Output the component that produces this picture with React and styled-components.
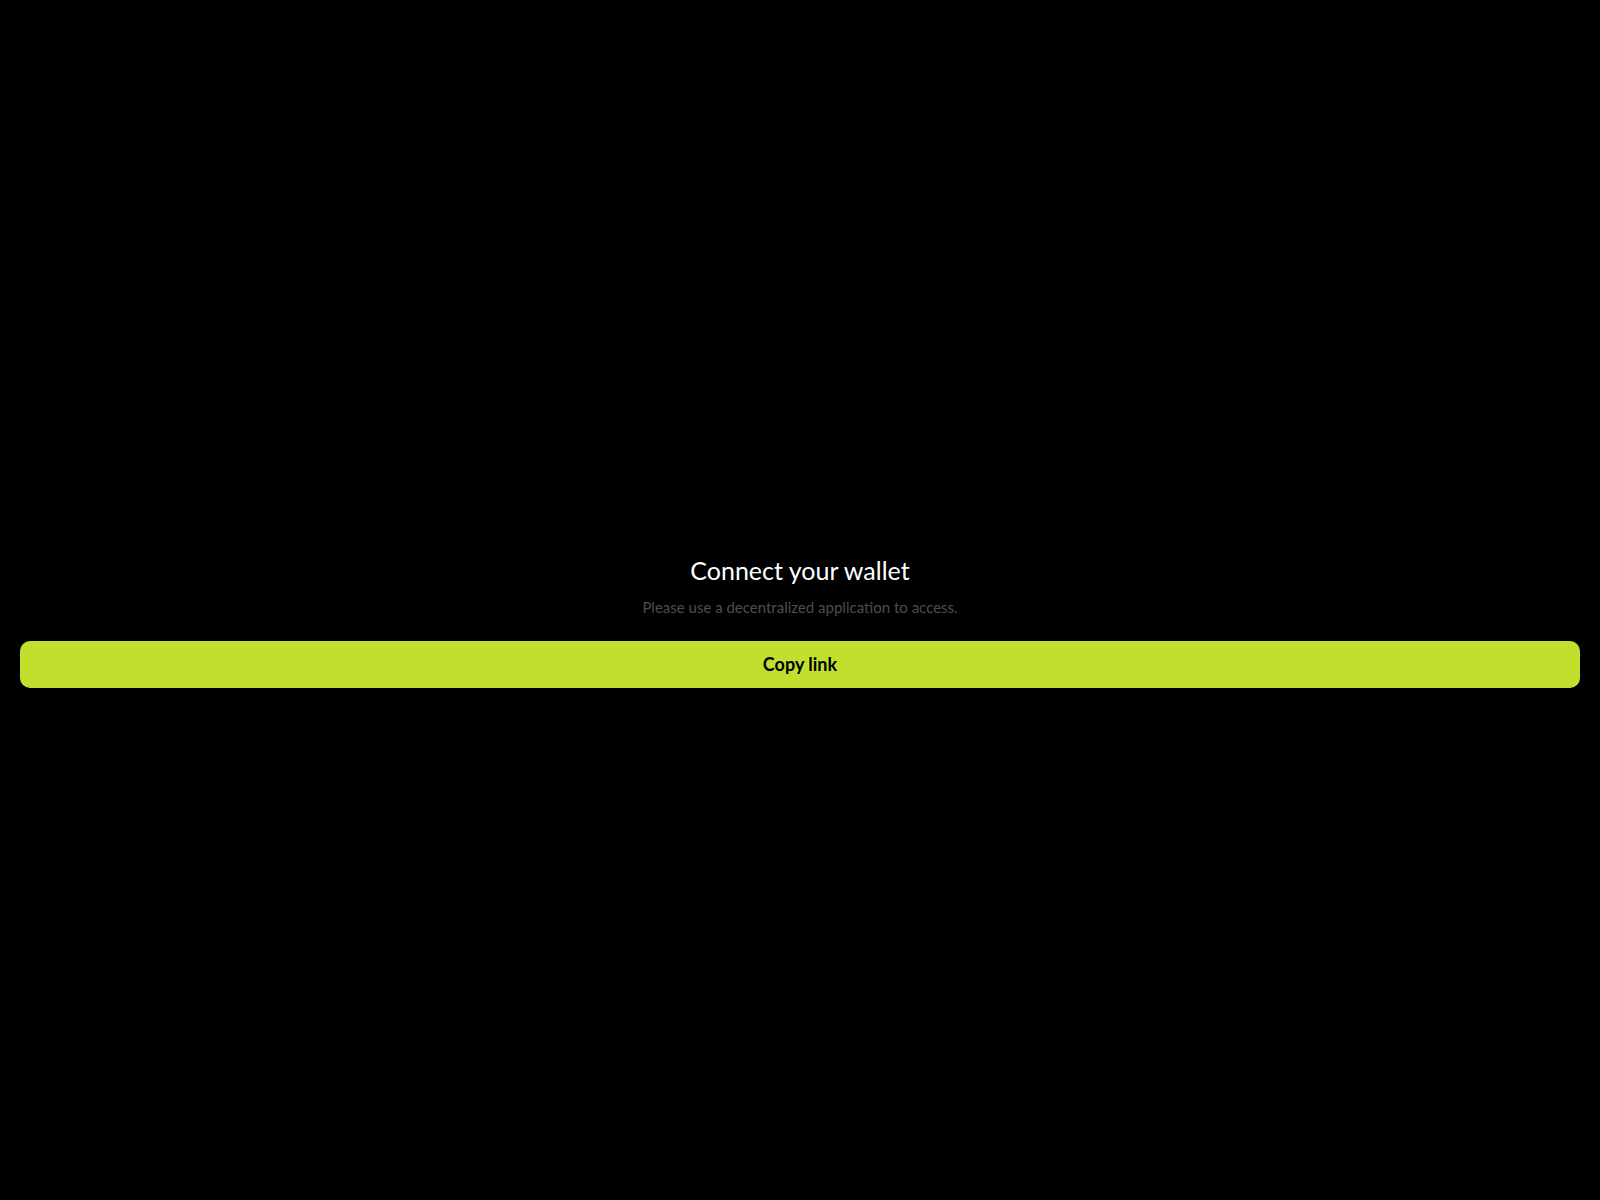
import React from "react";
import styled, { createGlobalStyle } from "styled-components";

const GlobalStyle = createGlobalStyle`
  html, body {
    margin: 0;
    padding: 0;
    background: #000;
  }
  body {
    font-family: "Lato", "Open Sans", "Liberation Sans", sans-serif;
  }
`;

const Screen = styled.main`
  min-height: 100vh;
  box-sizing: border-box;
  display: flex;
  flex-direction: column;
  justify-content: center;
  align-items: stretch;
  padding: 40px 20px 0;
  background: #000;
`;

const Title = styled.h1`
  margin: 0;
  text-align: center;
  font-size: 25px;
  line-height: 34px;
  font-weight: 400;
  color: #fff;
`;

const Subtitle = styled.p`
  margin: 9px 0 0;
  text-align: center;
  font-size: 15px;
  line-height: 22px;
  color: #4d4d4d;
`;

const CopyButton = styled.button`
  margin-top: 23px;
  height: 47px;
  width: 100%;
  border: 0;
  border-radius: 10px;
  background: #c3df2e;
  color: #000;
  font-family: inherit;
  font-size: 18px;
  font-weight: 700;
  cursor: pointer;
`;

const App = () => {
  return (
    <>
      <GlobalStyle />
      <Screen>
        <Title>Connect your wallet</Title>
        <Subtitle>Please use a decentralized application to access.</Subtitle>
        <CopyButton type="button">Copy link</CopyButton>
      </Screen>
    </>
  );
};

export default App;
